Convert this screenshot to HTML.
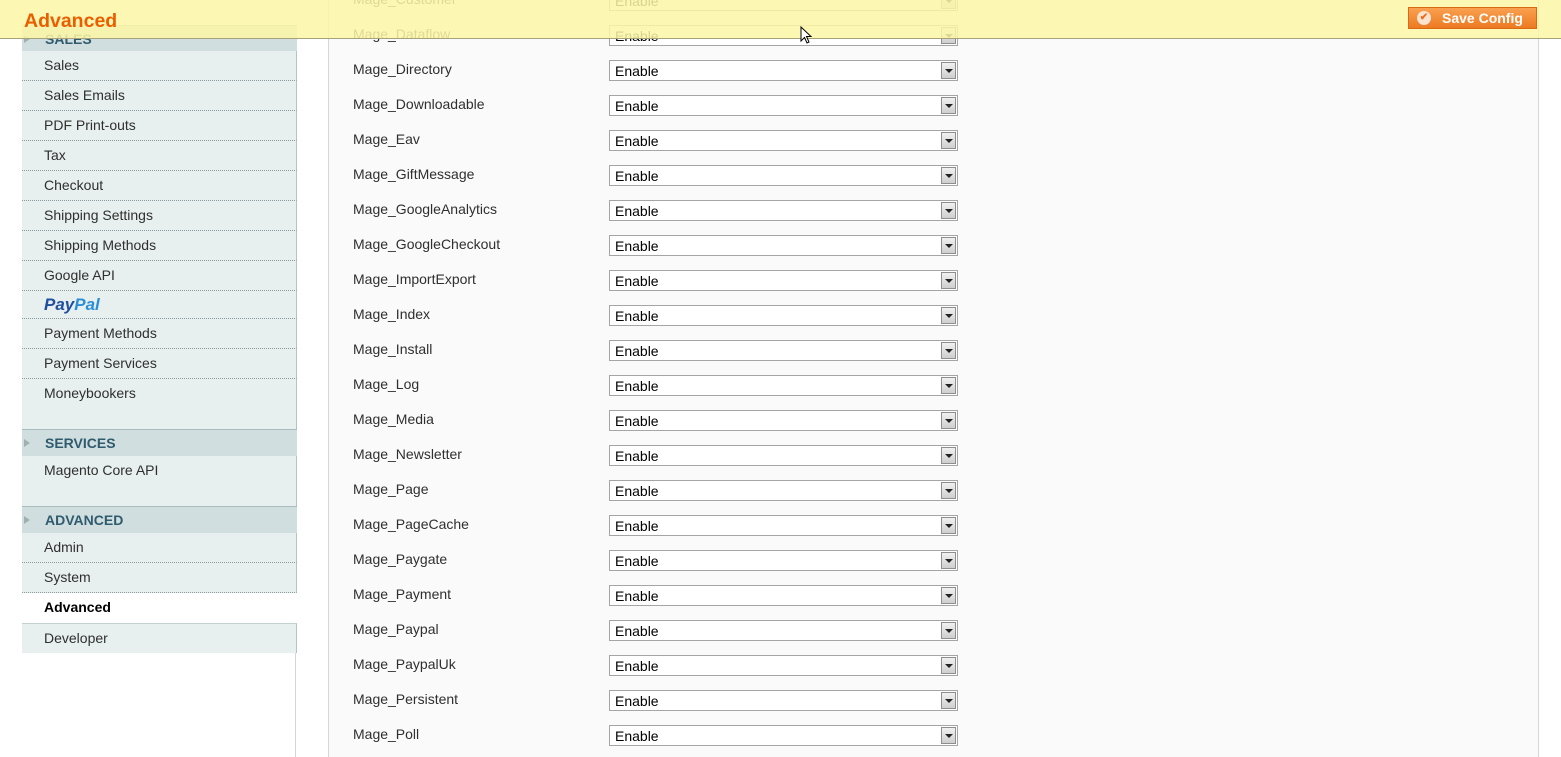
<!DOCTYPE html>
<html><head><meta charset="utf-8"><style>
*{margin:0;padding:0;box-sizing:border-box}
body{width:1561px;height:757px;overflow:hidden;background:#fff;font-family:"Liberation Sans",Arial,sans-serif;font-size:14px;color:#2f2f2f;position:relative}
#side{position:absolute;left:22px;top:0;width:275px}
.it{position:absolute;left:0;width:275px;background:#e7efef;border-right:1px solid #b6c3c4;padding-left:22px;line-height:29px;color:#2f2f2f}
.dot{border-bottom:1px dotted #8a9a9c}
.hd{position:absolute;left:0;width:275px;background:#d1dedf;border-top:1px solid #a9bcbe;padding-left:23px;font-weight:bold;color:#2f5b6e;font-size:14px}
.hd:before{content:"";position:absolute;left:2px;top:9px;border-left:6px solid #9fb0b2;border-top:4px solid transparent;border-bottom:4px solid transparent}
#vline{position:absolute;left:295px;top:653px;width:1px;height:104px;background:#d6d6d6}
#main{position:absolute;left:328px;top:0;width:1211px;height:757px;background:#fafafa;border-left:1px solid #d6d6d6;border-right:1px solid #d6d6d6}
.lb{position:absolute;left:353px;line-height:16px;color:#2f2f2f;margin-top:1px}
.sel{position:absolute;left:609px;width:349px;height:21px;background:#fff;border:1px solid #a5a5a5;line-height:20px;padding-left:5px;color:#000;font-size:14px}
.sel i{position:absolute;right:1px;top:1px;width:15px;height:17px;background:linear-gradient(#f0f0f0,#cfcfcf);border:1px solid #8e8e8e}
.sel i:after{content:"";position:absolute;left:3px;top:6px;border-top:4px solid #222;border-left:4px solid transparent;border-right:4px solid transparent}
#hdr{position:absolute;left:0;top:0;width:1561px;height:39px;background:rgba(251,246,165,0.86);border-bottom:1px solid #a8a27a}
#hdr h1{position:absolute;left:24px;top:10px;font-size:19.5px;font-weight:bold;color:#eb5e00;line-height:22px}
#btn{position:absolute;left:1408px;top:7px;width:129px;height:22px;background:linear-gradient(#f9a14f,#ed7a22);border:1px solid #d96a14;color:#fff;font-weight:bold;font-size:14px;line-height:20px;padding-left:33px}
#btn:before{content:"✔";position:absolute;left:8px;top:3px;width:14px;height:14px;border-radius:50%;background:#fbe3cf;color:#eb6d1a;font-size:10px;line-height:14px;text-align:center}
</style></head><body>
<div id="main"></div>
<div id="side">
<div class="hd" style="top:25px;height:26px;line-height:26px">SALES</div>
<div class="it dot" style="top:51px;height:30px">Sales</div>
<div class="it dot" style="top:81px;height:30px">Sales Emails</div>
<div class="it dot" style="top:111px;height:30px">PDF Print-outs</div>
<div class="it dot" style="top:141px;height:30px">Tax</div>
<div class="it dot" style="top:171px;height:30px">Checkout</div>
<div class="it dot" style="top:201px;height:30px">Shipping Settings</div>
<div class="it dot" style="top:231px;height:30px">Shipping Methods</div>
<div class="it dot" style="top:261px;height:30px">Google API</div>
<div class="it dot" style="top:291px;height:28px;line-height:27px;font-weight:bold;font-style:italic;font-size:17px;color:#1f4f9e">Pay<span style="color:#2a8fd6">Pal</span></div>
<div class="it dot" style="top:319px;height:30px">Payment Methods</div>
<div class="it dot" style="top:349px;height:30px">Payment Services</div>
<div class="it" style="top:379px;height:50px">Moneybookers</div>
<div class="hd" style="top:429px;height:27px;line-height:26px">SERVICES</div>
<div class="it" style="top:456px;height:50px;line-height:28px">Magento Core API</div>
<div class="hd" style="top:506px;height:27px;line-height:26px">ADVANCED</div>
<div class="it dot" style="top:533px;height:30px">Admin</div>
<div class="it dot" style="top:563px;height:30px">System</div>
<div class="it" style="top:593px;height:30px;background:#fff;border-right:none;font-weight:bold;color:#000">Advanced</div>
<div class="it" style="top:623px;height:30px;border-top:1px solid #c5d0d1;line-height:29px">Developer</div>
</div>
<div id="vline"></div>

<div class="lb" style="top:-10px">Mage_Customer</div><div class="sel" style="top:-10px">Enable<i></i></div>
<div class="lb" style="top:25px">Mage_Dataflow</div><div class="sel" style="top:25px">Enable<i></i></div>
<div class="lb" style="top:60px">Mage_Directory</div><div class="sel" style="top:60px">Enable<i></i></div>
<div class="lb" style="top:95px">Mage_Downloadable</div><div class="sel" style="top:95px">Enable<i></i></div>
<div class="lb" style="top:130px">Mage_Eav</div><div class="sel" style="top:130px">Enable<i></i></div>
<div class="lb" style="top:165px">Mage_GiftMessage</div><div class="sel" style="top:165px">Enable<i></i></div>
<div class="lb" style="top:200px">Mage_GoogleAnalytics</div><div class="sel" style="top:200px">Enable<i></i></div>
<div class="lb" style="top:235px">Mage_GoogleCheckout</div><div class="sel" style="top:235px">Enable<i></i></div>
<div class="lb" style="top:270px">Mage_ImportExport</div><div class="sel" style="top:270px">Enable<i></i></div>
<div class="lb" style="top:305px">Mage_Index</div><div class="sel" style="top:305px">Enable<i></i></div>
<div class="lb" style="top:340px">Mage_Install</div><div class="sel" style="top:340px">Enable<i></i></div>
<div class="lb" style="top:375px">Mage_Log</div><div class="sel" style="top:375px">Enable<i></i></div>
<div class="lb" style="top:410px">Mage_Media</div><div class="sel" style="top:410px">Enable<i></i></div>
<div class="lb" style="top:445px">Mage_Newsletter</div><div class="sel" style="top:445px">Enable<i></i></div>
<div class="lb" style="top:480px">Mage_Page</div><div class="sel" style="top:480px">Enable<i></i></div>
<div class="lb" style="top:515px">Mage_PageCache</div><div class="sel" style="top:515px">Enable<i></i></div>
<div class="lb" style="top:550px">Mage_Paygate</div><div class="sel" style="top:550px">Enable<i></i></div>
<div class="lb" style="top:585px">Mage_Payment</div><div class="sel" style="top:585px">Enable<i></i></div>
<div class="lb" style="top:620px">Mage_Paypal</div><div class="sel" style="top:620px">Enable<i></i></div>
<div class="lb" style="top:655px">Mage_PaypalUk</div><div class="sel" style="top:655px">Enable<i></i></div>
<div class="lb" style="top:690px">Mage_Persistent</div><div class="sel" style="top:690px">Enable<i></i></div>
<div class="lb" style="top:725px">Mage_Poll</div><div class="sel" style="top:725px">Enable<i></i></div>

<div id="hdr"><h1>Advanced</h1><div id="btn">Save Config</div></div>
<svg style="position:absolute;left:800px;top:26px" width="14" height="20" viewBox="0 0 14 20"><path d="M1 1 L1 15 L4.5 11.5 L7 17 L9 16 L6.5 10.5 L11 10.5 Z" fill="#fff" stroke="#000" stroke-width="1"/></svg>
</body></html>
